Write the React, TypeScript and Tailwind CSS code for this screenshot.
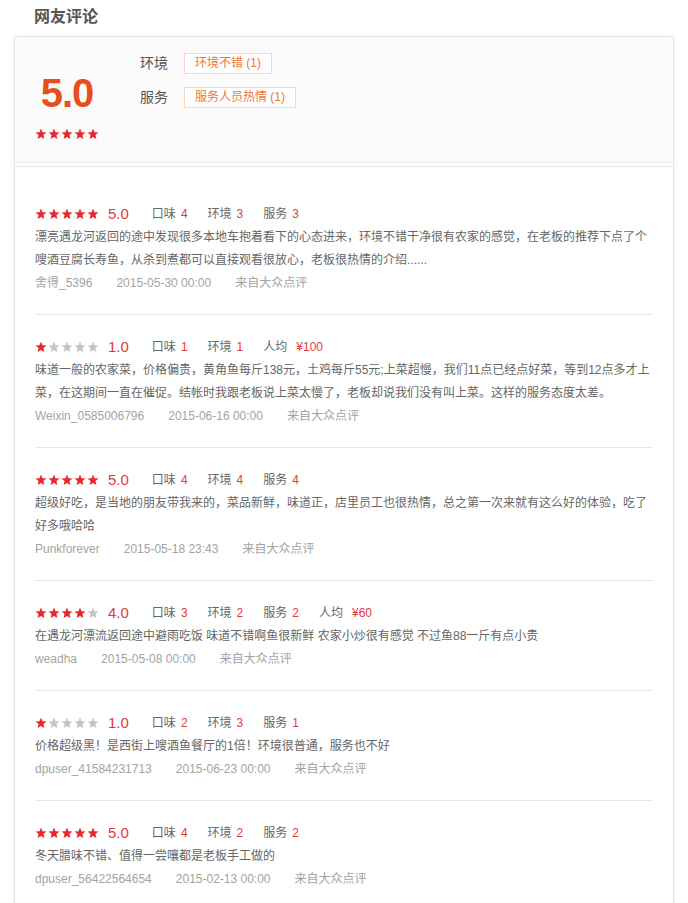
const FONT = { fontFamily: '"Liberation Sans", "Noto Sans CJK SC", sans-serif' }

type Sub = { label: string; value: string; wide?: boolean }
type Review = {
  stars: number
  score: string
  subs: Sub[]
  text: string
  user: string
  date: string
}

const reviews: Review[] = [
  {
    stars: 5,
    score: '5.0',
    subs: [
      { label: '口味', value: '4' },
      { label: '环境', value: '3' },
      { label: '服务', value: '3' },
    ],
    text: '漂亮遇龙河返回的途中发现很多本地车抱着看下的心态进来，环境不错干净很有农家的感觉，在老板的推荐下点了个嗖酒豆腐长寿鱼，从杀到煮都可以直接观看很放心，老板很热情的介绍......',
    user: '舍得_5396',
    date: '2015-05-30 00:00',
  },
  {
    stars: 1,
    score: '1.0',
    subs: [
      { label: '口味', value: '1' },
      { label: '环境', value: '1' },
      { label: '人均', value: '¥100', wide: true },
    ],
    text: '味道一般的农家菜，价格偏贵，黄角鱼每斤138元，土鸡每斤55元;上菜超慢，我们11点已经点好菜，等到12点多才上菜，在这期间一直在催促。结帐时我跟老板说上菜太慢了，老板却说我们没有叫上菜。这样的服务态度太差。',
    user: 'Weixin_0585006796',
    date: '2015-06-16 00:00',
  },
  {
    stars: 5,
    score: '5.0',
    subs: [
      { label: '口味', value: '4' },
      { label: '环境', value: '4' },
      { label: '服务', value: '4' },
    ],
    text: '超级好吃，是当地的朋友带我来的，菜品新鲜，味道正，店里员工也很热情，总之第一次来就有这么好的体验，吃了好多哦哈哈',
    user: 'Punkforever',
    date: '2015-05-18 23:43',
  },
  {
    stars: 4,
    score: '4.0',
    subs: [
      { label: '口味', value: '3' },
      { label: '环境', value: '2' },
      { label: '服务', value: '2' },
      { label: '人均', value: '¥60', wide: true },
    ],
    text: '在遇龙河漂流返回途中避雨吃饭 味道不错啊鱼很新鲜 农家小炒很有感觉 不过鱼88一斤有点小贵',
    user: 'weadha',
    date: '2015-05-08 00:00',
  },
  {
    stars: 1,
    score: '1.0',
    subs: [
      { label: '口味', value: '2' },
      { label: '环境', value: '3' },
      { label: '服务', value: '1' },
    ],
    text: '价格超级黑！是西街上嗖酒鱼餐厅的1倍！环境很普通，服务也不好',
    user: 'dpuser_41584231713',
    date: '2015-06-23 00:00',
  },
  {
    stars: 5,
    score: '5.0',
    subs: [
      { label: '口味', value: '4' },
      { label: '环境', value: '2' },
      { label: '服务', value: '2' },
    ],
    text: '冬天腊味不错、值得一尝嚷都是老板手工做的',
    user: 'dpuser_56422564654',
    date: '2015-02-13 00:00',
  },
]

function Star({ on }: { on: boolean }) {
  return (
    <svg width="12" height="12" viewBox="0 0 24 24">
      <polygon
        points="12,1 15,8.4 23,9 16.9,14.2 18.8,22.2 12,18 5.2,22.2 7.1,14.2 1,9 9,8.4"
        fill={on ? '#e8292c' : '#c4c4c4'}
      />
    </svg>
  )
}

function Stars({ n }: { n: number }) {
  return (
    <div className="flex gap-[1px]">
      {[0, 1, 2, 3, 4].map(i => (
        <Star key={i} on={i < n} />
      ))}
    </div>
  )
}

function Tag({ children }: { children: React.ReactNode }) {
  return (
    <span className="h-[21px] px-[10px] border border-[#f8d6c2] bg-white text-[12px] leading-[19px] text-[#f07636]">
      {children}
    </span>
  )
}

export default function App() {
  return (
    <div className="w-[688px] min-h-[903px] bg-white px-[14px]" style={FONT}>
      {/* Title */}
      <div className="pt-[5px] pl-[20px] text-[16px] leading-[24px] font-bold text-[#555]">网友评论</div>

      <div className="mt-[7px] border border-[#e3e3e3] rounded-[2px] bg-white shadow-[0_0_3px_rgba(0,0,0,0.06)]">
        {/* Summary */}
        <div className="h-[126px] flex bg-[#fbfbfb] border-b border-[#ececec]">
          <div className="w-[104px] flex flex-col items-center pt-[32px]">
            <div className="text-[40px] leading-[48px] font-bold text-[#e84e1c] tracking-[-1px]">5.0</div>
            <div className="mt-[11px]">
              <Stars n={5} />
            </div>
          </div>
          <div className="ml-[21px] pt-[14px] flex flex-col gap-[10px]">
            <div className="h-[24px] flex items-center gap-[16px]">
              <span className="text-[14px] text-[#555]">环境</span>
              <Tag>环境不错 (1)</Tag>
            </div>
            <div className="h-[24px] flex items-center gap-[16px]">
              <span className="text-[14px] text-[#555]">服务</span>
              <Tag>服务人员热情 (1)</Tag>
            </div>
          </div>
        </div>

        {/* Reviews */}
        <div className="mt-[3px] border-t border-[#e8e8e8] pt-[15px] px-[20px] divide-y divide-[#e8e8e8]">
          {reviews.map((r, i) => (
            <div key={i} className="py-[20px]">
              <div className="h-[24px] flex items-center">
                <Stars n={r.stars} />
                <span className="ml-[9px] text-[15px] text-[#e4393c]">{r.score}</span>
                <div className="ml-[23px] flex items-center gap-[20px]">
                  {r.subs.map(s => (
                    <span key={s.label} className="text-[12px] text-[#666]">
                      {s.label}
                      <span className={`${s.wide ? 'ml-[9px]' : 'ml-[5px]'} text-[#e4393c]`}>{s.value}</span>
                    </span>
                  ))}
                </div>
              </div>
              <p className="text-[12px] leading-[23px] text-[#666]">{r.text}</p>
              <div className="flex gap-[24px] text-[12px] leading-[22px] text-[#a3a3a3]">
                <span>{r.user}</span>
                <span>{r.date}</span>
                <span>来自大众点评</span>
              </div>
            </div>
          ))}
        </div>
      </div>
    </div>
  )
}
